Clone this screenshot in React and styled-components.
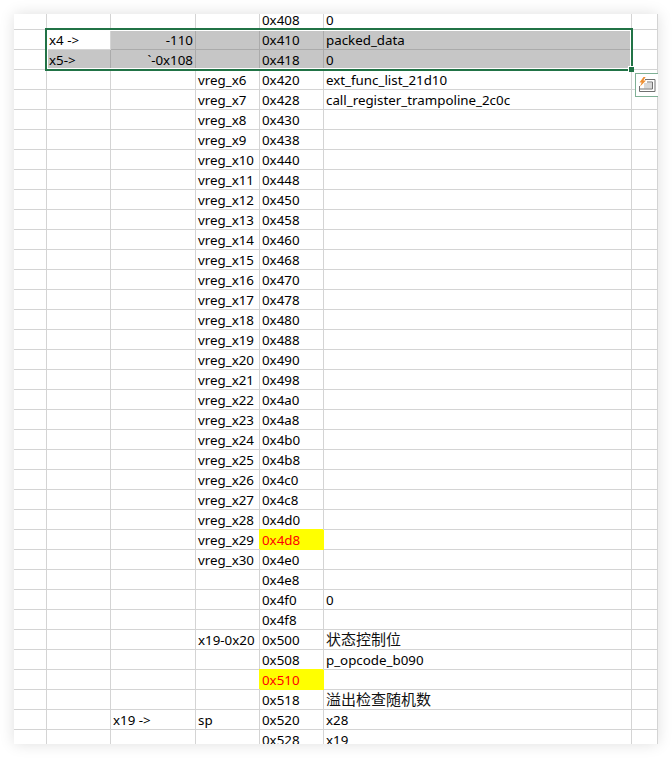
import React from 'react';
import styled, { createGlobalStyle } from 'styled-components';

const ROWS = [
  ['', '', '', '0x408', '0'],
  ['x4 ->', '-110', '', '0x410', 'packed_data', 'active'],
  ['x5->', '`-0x108', '', '0x418', '0', 'selected'],
  ['', '', 'vreg_x6', '0x420', 'ext_func_list_21d10'],
  ['', '', 'vreg_x7', '0x428', 'call_register_trampoline_2c0c'],
  ['', '', 'vreg_x8', '0x430', ''],
  ['', '', 'vreg_x9', '0x438', ''],
  ['', '', 'vreg_x10', '0x440', ''],
  ['', '', 'vreg_x11', '0x448', ''],
  ['', '', 'vreg_x12', '0x450', ''],
  ['', '', 'vreg_x13', '0x458', ''],
  ['', '', 'vreg_x14', '0x460', ''],
  ['', '', 'vreg_x15', '0x468', ''],
  ['', '', 'vreg_x16', '0x470', ''],
  ['', '', 'vreg_x17', '0x478', ''],
  ['', '', 'vreg_x18', '0x480', ''],
  ['', '', 'vreg_x19', '0x488', ''],
  ['', '', 'vreg_x20', '0x490', ''],
  ['', '', 'vreg_x21', '0x498', ''],
  ['', '', 'vreg_x22', '0x4a0', ''],
  ['', '', 'vreg_x23', '0x4a8', ''],
  ['', '', 'vreg_x24', '0x4b0', ''],
  ['', '', 'vreg_x25', '0x4b8', ''],
  ['', '', 'vreg_x26', '0x4c0', ''],
  ['', '', 'vreg_x27', '0x4c8', ''],
  ['', '', 'vreg_x28', '0x4d0', ''],
  ['', '', 'vreg_x29', '0x4d8', '', 'flag'],
  ['', '', 'vreg_x30', '0x4e0', ''],
  ['', '', '', '0x4e8', ''],
  ['', '', '', '0x4f0', '0'],
  ['', '', '', '0x4f8', ''],
  ['', '', 'x19-0x20', '0x500', '状态控制位'],
  ['', '', '', '0x508', 'p_opcode_b090'],
  ['', '', '', '0x510', '', 'flag'],
  ['', '', '', '0x518', '溢出检查随机数'],
  ['', 'x19 ->', 'sp', '0x520', 'x28'],
  ['', '', '', '0x528', 'x19'],
];

const GlobalStyle = createGlobalStyle`
  body {
    margin: 0;
    background: #fff;
  }
`;

const Shadow = styled.div`
  box-shadow: 0 0 14px rgba(0, 0, 0, 0.13);
  width: 644px;
  height: 730px;
  margin: 14px;
`;

const Sheet = styled.div`
  position: relative;
  height: 730px;
  overflow: hidden;
  background: #fff;
`;

const Rows = styled.div`
  margin-top: -4px;
`;

const Row = styled.div`
  display: grid;
  grid-template-columns: 33px 64px 85px 64px 64px 308px 26px;
  height: 20px;
`;

const Cell = styled.div`
  box-sizing: border-box;
  height: 20px;
  padding: 0 2px;
  border-right: 1px solid ${p => (p.$shaded ? '#ababab' : '#d4d4d4')};
  border-bottom: 1px solid ${p => (p.$shaded ? '#ababab' : '#d4d4d4')};
  background: ${p => (p.$shaded ? '#c6c6c6' : '#fff')};
  color: #000;
  font: 13.33px/21px 'Noto Sans', 'Noto Sans CJK SC', sans-serif;
  text-align: ${p => (p.$right ? 'right' : 'left')};
  white-space: nowrap;
`;

const FlagCell = styled(Cell)`
  position: relative;
  border-color: #ffff00;
  background: #ffff00;
  box-shadow: -1px -1px 0 #ffff00;
  color: #ff0000;
`;

const CjkText = styled.span`
  position: relative;
  top: -1px;
  font-size: 15px;
  color: #111;
`;

const Selection = styled.div`
  position: absolute;
  top: 14px;
  left: 31px;
  box-sizing: border-box;
  width: 588px;
  height: 43px;
  border: 2px solid #217346;
  box-shadow: inset 0 0 0 1px #fff;
`;

const Handle = styled.div`
  position: absolute;
  right: -3px;
  bottom: -3px;
  width: 5px;
  height: 5px;
  background: #217346;
  box-shadow: -1px -1px 0 #fff;
`;

const TagButton = styled.div`
  position: absolute;
  top: 59px;
  left: 621px;
  box-sizing: border-box;
  display: flex;
  align-items: center;
  justify-content: center;
  width: 32px;
  height: 24px;
  padding-right: 8px;
  border: 1px solid #7fb095;
  background: #fff;
`;

const isCjk = text => /[\u4e00-\u9fff]/.test(text);

function QuickAnalysisIcon() {
  return (
    <svg width='18' height='18' viewBox='0 0 18 18'>
      <path d='M7 3.5H17V15.5H1.5V10' fill='none' stroke='#707070' />
      <rect x='6' y='7' width='8' height='5.5' fill='#d8d8d8' />
      <path d='M9 6H14.5V13H1.5' fill='none' stroke='#707070' />
      <path d='M5.5 1 1.5 6.5h2.2L2 10.5 8 4.6H5.4L7.6 1z' fill='#ed8f33' />
    </svg>
  );
}

export default function App() {
  return (
    <>
      <GlobalStyle />
      <Shadow>
        <Sheet>
          <Rows>
            {ROWS.map(([a, b, c, addr, value, kind]) => {
              const shaded = kind === 'active' || kind === 'selected';
              return (
                <Row key={addr}>
                  <Cell />
                  <Cell $shaded={kind === 'selected'}>{a}</Cell>
                  <Cell $shaded={shaded} $right={shaded}>{b}</Cell>
                  <Cell $shaded={shaded}>{c}</Cell>
                  {kind === 'flag' ? <FlagCell>{addr}</FlagCell> : <Cell $shaded={shaded}>{addr}</Cell>}
                  <Cell $shaded={shaded}>{isCjk(value) ? <CjkText>{value}</CjkText> : value}</Cell>
                  <Cell />
                </Row>
              );
            })}
          </Rows>
          <Selection>
            <Handle />
          </Selection>
          <TagButton>
            <QuickAnalysisIcon />
          </TagButton>
        </Sheet>
      </Shadow>
    </>
  );
}
